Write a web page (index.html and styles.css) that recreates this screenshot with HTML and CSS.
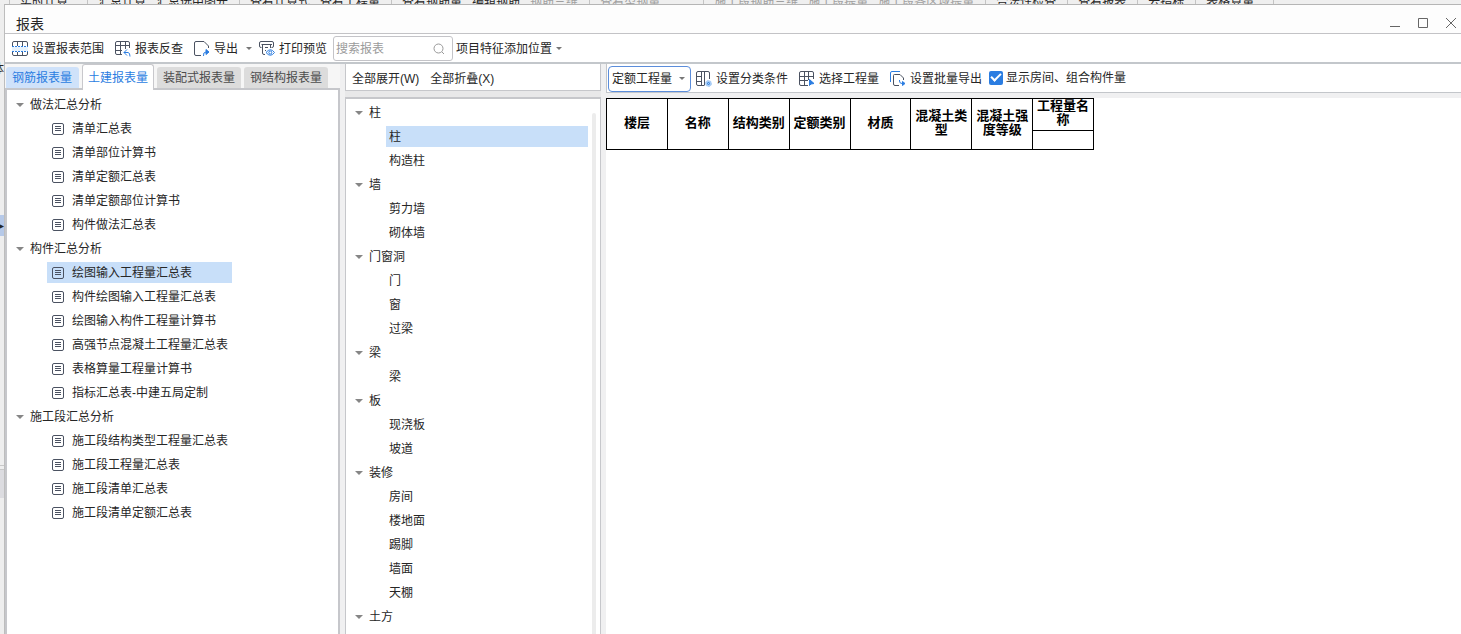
FILE: index.html
```html
<!DOCTYPE html>
<html lang="zh-CN">
<head>
<meta charset="utf-8">
<title>报表</title>
<link rel="stylesheet" href="styles.css">
</head>
<body>
<div class="app">
  <nav class="ribbon" aria-label="功能区">
    <div class="ribbon-group first"><span>实时计算</span></div>
    <div class="ribbon-group"><span>汇总计算</span><span>汇总选中图元</span></div>
    <div class="ribbon-group"><span>查看计算式</span><span>查看工程量</span></div>
    <div class="ribbon-group"><span>查看钢筋量</span><span>编辑钢筋</span><span class="off">钢筋三维</span></div>
    <div class="ribbon-group wide"><span class="off">查看型钢量</span></div>
    <div class="ribbon-group"><span class="off">施工段钢筋三维</span><span class="off">施工段提量</span><span class="off">施工段各区域提量</span></div>
    <div class="ribbon-group"><span>合法性检查</span></div>
    <div class="ribbon-group"><span>查看报表</span></div>
    <div class="ribbon-group"><span>云指标</span></div>
    <div class="ribbon-group last"><span>表格算量</span></div>
  </nav>
  <div class="stage">
    <div class="dock"><span class="dock-text">体</span><span class="dock-handle">▸</span><span class="dock-line"></span><span class="dock-block"></span></div>
    <section class="dialog" aria-label="报表">
      <header class="titlebar">
        <h1>报表</h1>
        <div class="window-buttons">
          <button aria-label="最小化"><svg viewBox="0 0 12 12"><path d="M1 9.500H11"/></svg></button>
          <button aria-label="最大化"><svg viewBox="0 0 12 12"><path d="M1.500 1.500H10.500V10.500H1.500Z"/></svg></button>
          <button aria-label="关闭"><svg viewBox="0 0 12 12"><path d="M1 1L11 11M11 1L1 11"/></svg></button>
        </div>
      </header>
      <div class="toolbar">
        <button class="tool"><svg class="icon" viewBox="0 0 16 16"><path d="M.5 5V2Q.5 .5 2 .5H14Q15.500 .5 15.500 2V5M.5 11V13Q.5 14.500 2 14.500H14Q15.500 14.500 15.500 13V11M5.500 .5V5M10.500 .5V5M5.500 11V14.500M10.500 11V14.500"/><path class="band" d="M0 8H16"/><path class="blue dots" d="M0 5.500H16M0 10.500H16"/></svg>设置报表范围</button>
        <button class="tool"><svg class="icon" viewBox="0 0 16 16"><path d="M7 13.500H2Q.5 13.500 .5 12V2Q.5 .5 2 .5H13Q14.500 .5 14.500 2V7M.5 4.500H14.500M.5 9.500H7M5.500 .5V13.500M10.500 .5V8"/><path class="blue" d="M9 11.500H13Q15 11.500 15 15.500M12 8.500L9 11.500L12 14.500"/></svg>报表反查</button>
        <button class="tool export"><svg class="icon" viewBox="0 0 16 16"><path d="M7 14.500H2Q.5 14.500 .5 13V2Q.5 .5 2 .5H10L14.500 5V7"/><path class="blue" d="M9.500 15Q9 11 12 11"/><path class="blue solid" d="M12 8.500L15 11L12 13.500Z"/></svg>导出<span class="caret"></span></button>
        <button class="tool"><svg class="icon" viewBox="0 0 16 16"><path d="M2.500 6.500H2Q.5 6.500 .5 5V2Q.5 .5 2 .5H13Q14.500 .5 14.500 2V5Q14.500 6.500 13 6.500H12.500M2.500 3.500H13M3.500 3.500V12Q3.500 13.500 5 13.500H6M11.500 3.500V7M6 6.500H9M6 9.500H7"/><path class="blue" d="M7 11.500Q11.500 6 15.500 11.500Q11.500 17 7 11.500Z"/><circle class="blue" cx="11.300" cy="11.500" r="1.500"/></svg>打印预览</button>
        <div class="search"><input type="text" placeholder="搜索报表" aria-label="搜索报表"><svg viewBox="0 0 12 12"><circle cx="5.500" cy="5.500" r="4.500"/><path d="M9 9L11 11"/></svg></div>
        <button class="tool plain">项目特征添加位置<span class="caret"></span></button>
      </div>
      <div class="workspace">
        <aside class="reports">
          <div class="tabs" role="tablist">
            <button class="tab tinted" role="tab">钢筋报表量</button>
            <button class="tab active" role="tab" aria-selected="true">土建报表量</button>
            <button class="tab" role="tab">装配式报表量</button>
            <button class="tab" role="tab">钢结构报表量</button>
          </div>
          <div class="report-tree" id="reports"></div>
        </aside>
        <section class="components">
          <div class="fold-bar"><button>全部展开(W)</button><button>全部折叠(X)</button></div>
          <div class="component-tree"><div id="components"></div><div class="scroll-track"></div></div>
        </section>
        <main class="result">
          <div class="result-bar">
            <div class="select-box"><select aria-label="工程量类型"><option>定额工程量</option></select><span class="caret"></span></div>
            <button class="tool"><svg class="icon" viewBox="0 0 16 16"><path d="M8 14.500H2Q.5 14.500 .5 13V2Q.5 .5 2 .5H12Q13.500 .5 13.500 2V8M5.500 .5V14.500M8.500 .5V14.500M.5 5.500H5.500M.5 10.500H5.500"/><circle class="gear" cx="12.500" cy="12.500" r="3"/><circle class="blue" cx="12.500" cy="12.500" r="1"/></svg>设置分类条件</button>
            <button class="tool"><svg class="icon" viewBox="0 0 16 16"><path d="M9 14.500H2Q.5 14.500 .5 13V2Q.5 .5 2 .5H13Q14.500 .5 14.500 2V8M.5 5.500H14.500M.5 9.500H9M5.500 .5V14.500M9.500 .5V9"/><path class="blue solid" d="M10.500 8.500L15 12.500L12 13L10.500 14.500Z"/></svg>选择工程量</button>
            <button class="tool"><svg class="icon" viewBox="0 0 16 16"><path class="blue" d="M.5 11V2Q.5 .5 2 .5H10"/><path d="M9 14.500H5Q3.500 14.500 3.500 13V4.500Q3.500 3.500 4.500 3.500H10L13.500 7V9"/><path class="blue" d="M9.500 9V10Q9.500 12.500 12 12.500H13"/><path class="blue solid" d="M12.500 10.500L15 12.500L12.500 14.500Z"/></svg>设置批量导出</button>
            <label class="check"><input type="checkbox" checked>显示房间、组合构件量</label>
          </div>
          <div class="sheet">
            <table>
              <tr class="head"><th rowspan="2">楼层</th><th rowspan="2">名称</th><th rowspan="2">结构类别</th><th rowspan="2">定额类别</th><th rowspan="2">材质</th><th rowspan="2">混凝土类型</th><th rowspan="2">混凝土强度等级</th><th>工程量名称</th></tr>
              <tr class="sub"><td></td></tr>
            </table>
          </div>
        </main>
      </div>
    </section>
  </div>
</div>
<script src="trees.js"></script>
</body>
</html>
```
FILE: styles.css
```css
* { box-sizing: border-box; }
body {
  margin: 0;
  font: 12px/16px "Liberation Sans", "Noto Sans CJK SC", sans-serif;
  color: #262626;
}
button, input, select { font: inherit; color: inherit; }
button { border: 0; padding: 0; background: none; white-space: nowrap; }
.app { height: 100vh; display: flex; flex-direction: column; overflow: hidden; background: #f0f0f0; }
.ribbon { flex: none; height: 4px; padding-left: 9px; display: flex; align-items: center; overflow: hidden; background: #efefef; white-space: nowrap; }
.ribbon-group { display: flex; gap: 10px; padding: 0 11px 0 10px; border-right: 1px solid #c4c4c4; }
.ribbon-group.first { border-left: 1px solid #c4c4c4; padding-right: 19px; }
.ribbon-group.wide { padding-right: 43px; }
.ribbon-group.last { padding-right: 19px; }
.off { color: #a0a0a0; }
.stage { flex: 1; display: flex; min-height: 0; }
.dock { flex: none; width: 4px; overflow: hidden; background: #eeeeee; display: flex; flex-direction: column; }
.dock-text { margin-top: 57px; height: 16px; display: flex; justify-content: flex-end; }
.dock-handle { margin-top: 138px; height: 21px; line-height: 21px; background: #b6c9e8; font-size: 10px; display: flex; justify-content: flex-end; }
.dock-line { margin-top: 229px; height: 5px; border-top: 1px solid #c8c8c8; border-bottom: 1px solid #c8c8c8; }
.dock-block { height: 28px; background: #dcdce0; }
.dialog { flex: 1; min-width: 0; display: flex; flex-direction: column; border-top: 1px solid #b5b5b5; border-left: 1px solid #bdbdbd; background: #fff; }
.titlebar { flex: none; height: 29px; padding: 0 4px 0 11px; display: flex; align-items: center; justify-content: space-between; border-bottom: 1px solid #c3c3c6; background: #fdfdfd; }
h1 { margin: 0; padding-top: 9px; font-size: 14px; line-height: 20px; font-weight: 400; }
.window-buttons { display: flex; gap: 16px; padding-top: 8px; }
.window-buttons button { display: flex; }
.window-buttons svg { width: 12px; height: 12px; fill: none; stroke: #666; }
.toolbar { flex: none; height: 30px; padding: 1px 7px 0; display: flex; align-items: center; border-bottom: 2px solid #c3c7cb; }
.tool { display: flex; align-items: center; gap: 4px; margin-right: 11px; }
.icon { flex: none; width: 16px; height: 16px; fill: none; stroke: #4b5261; }
.icon .blue { stroke: #2b7de1; }
.icon .solid { fill: #2b7de1; }
.icon .dots { stroke-dasharray: 2 1; }
.icon .band { stroke: #e6f2fd; stroke-width: 4; }
.icon .gear { fill: #a9cdf5; stroke: #a9cdf5; stroke-dasharray: 2 1; }
.caret { border: 3px solid transparent; border-top-color: #777; border-bottom: 0; }
.export { margin-right: 7px; }
.export .caret { margin-left: 4px; }
.search { display: flex; align-items: center; width: 120px; height: 25px; margin: 0 3px 0 -5px; border: 1px solid #c4c4c8; border-radius: 3px; padding: 0 7px 0 2px; }
.search input { flex: 1; min-width: 0; border: 0; padding: 0; outline: 0; background: none; }
.search input::placeholder { color: #9b9b9b; opacity: 1; }
.search svg { width: 12px; height: 12px; fill: none; stroke: #999; }
.workspace { flex: 1; min-height: 0; display: flex; background: #f0f0f1; }
.reports { flex: none; width: 335px; display: flex; flex-direction: column; }
.tabs { flex: none; height: 24px; display: flex; align-items: flex-end; gap: 3px; padding-left: 1px; background: #f6f6f6; }
.tab { height: 21px; padding: 0 6px; border-radius: 3px 3px 0 0; background: #dcdcdc; color: #4c4c4c; }
.tab.tinted { padding-right: 7px; background: #cfe2fa; color: #2b7de1; }
.tab.active { height: 26px; margin-bottom: -2px; border: 1px solid #c8c8cc; border-bottom: 0; background: #fff; color: #2b7de1; padding: 0 5px; position: relative; }
.report-tree { flex: 1; border: 2px solid #c6c7cb; border-bottom: 0; background: #fff; padding: 3px 0; overflow: hidden; }
.tree-list { list-style: none; margin: 0; padding: 0; }
.tree-group { display: flex; align-items: center; gap: 6px; height: 24px; }
.tree-group .caret { border-width: 4px; border-bottom: 0; border-top-color: #868686; }
.report-tree .tree-group { padding-left: 9px; }
.tree-leaf { display: flex; align-items: center; height: 21px; text-align: left; }
.tree-list li { padding: 1px 0 2px; }
.report-tree .tree-leaf { margin-left: 40px; width: 185px; padding-left: 5px; gap: 8px; }
.tree-leaf svg { width: 12px; height: 12px; fill: none; stroke: #4b5261; }
.tree-leaf.selected { background: #c8dff9; }
.components { flex: none; width: 256px; margin-left: 5px; display: flex; flex-direction: column; background: #e8e8e9; }
.fold-bar { flex: none; height: 27px; margin-bottom: 6px; display: flex; align-items: center; gap: 11px; padding: 4px 6px 0; border: 1px solid #c6c7cb; border-top: 0; background: #fff; }
.component-tree { flex: 1; min-height: 0; display: flex; justify-content: space-between; padding: 2px 4px 0 9px; border: 1px solid #c6c7cb; border-top-width: 2px; border-bottom: 0; background: #fff; overflow: hidden; }
.component-tree .tree-leaf { margin-left: 31px; width: 202px; padding-left: 3px; }
.scroll-track { width: 4px; margin-top: 12px; border-radius: 2px 2px 0 0; background: #ececec; }
.result { flex: 1; min-width: 0; margin-left: 5px; display: flex; flex-direction: column; }
.result-bar { flex: none; height: 29px; margin-bottom: 5px; padding: 1px 1px 0; display: flex; align-items: center; border: 1px solid #c3c6ca; border-width: 0 0 1px 1px; background: #fff; }
.select-box { display: flex; align-items: center; width: 83px; height: 26px; margin-right: 5px; padding: 0 5px 0 3px; border: 1px solid #5b8ddb; border-radius: 4px; }
.select-box select { flex: 1; min-width: 0; padding: 0; border: 0; outline: 0; background: none; appearance: none; }
.check { display: flex; align-items: center; gap: 3px; margin-left: -4px; padding-bottom: 2px; white-space: nowrap; }
.check input { appearance: none; width: 14px; height: 14px; margin: 0; border-radius: 2px; background: #2b7de1; display: grid; place-items: center; }
.check input:checked::before { content: ""; width: 8px; height: 4px; margin-bottom: 3px; border: solid #fff; border-width: 0 0 2px 2px; transform: rotate(-45deg); }
.sheet { flex: 1; background: #fff; }
table { border-collapse: collapse; table-layout: fixed; width: 488px; color: #000; }
th, td { border: 1px solid #000; padding: 0; font-size: 13px; line-height: 14px; text-align: center; word-break: break-all; }
.head { height: 32px; }
.head th { padding: 0 3px 3px; }
.sub { height: 19px; }
```
FILE: trees.js
```javascript
const reports = [
  ["做法汇总分析", ["清单汇总表", "清单部位计算书", "清单定额汇总表", "清单定额部位计算书", "构件做法汇总表"]],
  ["构件汇总分析", ["绘图输入工程量汇总表", "构件绘图输入工程量汇总表", "绘图输入构件工程量计算书", "高强节点混凝土工程量汇总表", "表格算量工程量计算书", "指标汇总表-中建五局定制"]],
  ["施工段汇总分析", ["施工段结构类型工程量汇总表", "施工段工程量汇总表", "施工段清单汇总表", "施工段清单定额汇总表"]]
];
const components = [
  ["柱", ["柱", "构造柱"]],
  ["墙", ["剪力墙", "砌体墙"]],
  ["门窗洞", ["门", "窗", "过梁"]],
  ["梁", ["梁"]],
  ["板", ["现浇板", "坡道"]],
  ["装修", ["房间", "楼地面", "踢脚", "墙面", "天棚"]],
  ["土方", []]
];
const page = '<svg viewBox="0 0 12 12"><rect x=".5" y=".5" width="11" height="11" rx="1.500"/><path d="M3 3.500H9M3 5.500H9M3 7.500H9"/></svg>';

function renderTree(id, groups, selected, icon) {
  document.getElementById(id).innerHTML = groups.map(([name, leaves]) =>
    `<button class="tree-group"><span class="caret"></span>${name}</button><ul class="tree-list">` +
    leaves.map(leaf => `<li><button class="tree-leaf${leaf === selected ? " selected" : ""}">${icon}${leaf}</button></li>`).join("") +
    "</ul>").join("");
}
renderTree("reports", reports, "绘图输入工程量汇总表", page);
renderTree("components", components, "柱", "");
```
